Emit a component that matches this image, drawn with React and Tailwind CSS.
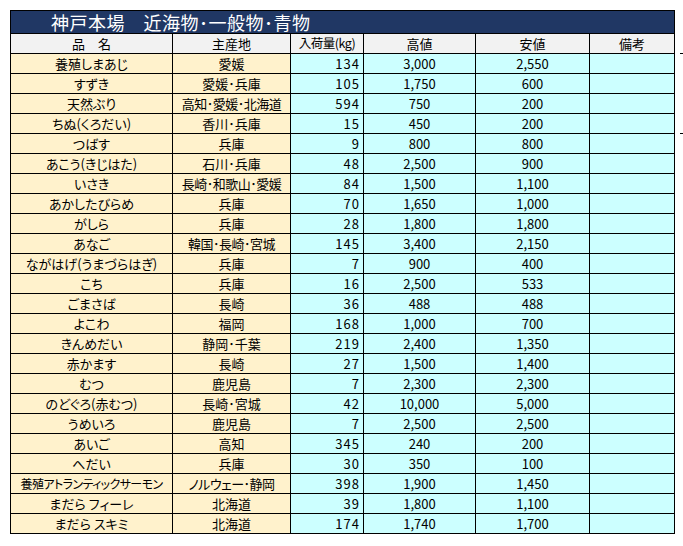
import React from 'react'

const rows = [
  ['養殖しまあじ', '愛媛', '134', '3,000', '2,550'],
  ['すずき', '愛媛･兵庫', '105', '1,750', '600'],
  ['天然ぶり', '高知･愛媛･北海道', '594', '750', '200'],
  ['ちぬ(くろだい)', '香川･兵庫', '15', '450', '200'],
  ['つばす', '兵庫', '9', '800', '800'],
  ['あこう(きじはた)', '石川･兵庫', '48', '2,500', '900'],
  ['いさき', '長崎･和歌山･愛媛', '84', '1,500', '1,100'],
  ['あかしたびらめ', '兵庫', '70', '1,650', '1,000'],
  ['がしら', '兵庫', '28', '1,800', '1,800'],
  ['あなご', '韓国･長崎･宮城', '145', '3,400', '2,150'],
  ['ながはげ(うまづらはぎ)', '兵庫', '7', '900', '400'],
  ['こち', '兵庫', '16', '2,500', '533'],
  ['ごまさば', '長崎', '36', '488', '488'],
  ['よこわ', '福岡', '168', '1,000', '700'],
  ['きんめだい', '静岡･千葉', '219', '2,400', '1,350'],
  ['赤かます', '長崎', '27', '1,500', '1,400'],
  ['むつ', '鹿児島', '7', '2,300', '2,300'],
  ['のどぐろ(赤むつ)', '長崎･宮城', '42', '10,000', '5,000'],
  ['うめいろ', '鹿児島', '7', '2,500', '2,500'],
  ['あいご', '高知', '345', '240', '200'],
  ['へだい', '兵庫', '30', '350', '100'],
  ['養殖アトランティックサーモン', 'ノルウェー･静岡', '398', '1,900', '1,450'],
  ['まだら フィーレ', '北海道', '39', '1,800', '1,100'],
  ['まだら スキミ', '北海道', '174', '1,740', '1,700'],
]

const cell = 'border border-black p-0 h-[20px] leading-none whitespace-nowrap overflow-hidden'

export default function App() {
  return (
    <div className="relative w-[683px] h-[546px] bg-white pt-[10px] pl-[10px] text-black font-['Noto_Sans_CJK_JP',sans-serif] [font-feature-settings:'palt']">
      {/* stray marks at the right edge */}
      <span className="absolute left-[680px] top-[53px] w-[3px] h-px bg-black" />
      <span className="absolute left-[680px] top-[133px] w-[3px] h-px bg-black" />

      <table className="border-collapse table-fixed w-[664px] text-[13px]">
        <colgroup>
          <col className="w-[162px]" />
          <col className="w-[118px]" />
          <col className="w-[73px]" />
          <col className="w-[112px]" />
          <col className="w-[114px]" />
          <col className="w-[85px]" />
        </colgroup>
        <tbody>
          <tr>
            <td colSpan={6} className="border border-black bg-[#203764] h-[23px] p-0 pl-[40px] text-white text-[18px] leading-none tracking-[0.5px]">
              神戸本場　近海物･一般物･青物
            </td>
          </tr>
          <tr className="bg-[#f2f2f2]">
            <td className={`${cell} text-center`}>品　名</td>
            <td className={`${cell} text-center`}>主産地</td>
            <td className={`${cell} text-center text-[12.5px] tracking-[-0.5px]`}>入荷量(kg)</td>
            <td className={`${cell} text-center`}>高値</td>
            <td className={`${cell} text-center`}>安値</td>
            <td className={`${cell} text-center`}>備考</td>
          </tr>
          {rows.map((r, i) => (
            <tr key={i}>
              <td className={`${cell} bg-[#fff2cc] text-center ${r[0].length > 12 ? 'text-[12px] tracking-[-0.6px]' : ''}`}>{r[0]}</td>
              <td className={`${cell} bg-[#fff2cc] text-center ${r[1].length > 7 ? 'tracking-[-0.5px]' : ''}`}>{r[1]}</td>
              <td className={`${cell} bg-[#ccffff] text-right pr-[3px] tracking-[1px]`}>{r[2]}</td>
              <td className={`${cell} bg-[#ccffff] text-center`}>{r[3]}</td>
              <td className={`${cell} bg-[#ccffff] text-center`}>{r[4]}</td>
              <td className={`${cell} bg-[#ccffff]`}></td>
            </tr>
          ))}
        </tbody>
      </table>
    </div>
  )
}
